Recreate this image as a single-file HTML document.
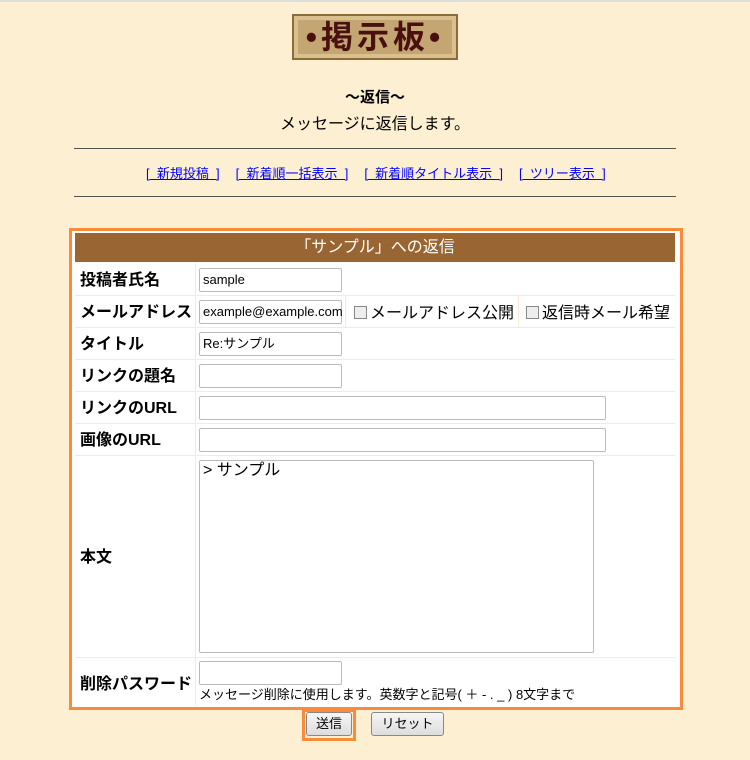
<!DOCTYPE html>
<html><head><meta charset="utf-8"><style>
body{margin:0;width:750px;height:760px;background:#fdf0d2;font-family:"Liberation Sans","Noto Sans CJK JP",sans-serif;position:relative;overflow:hidden}
.a{position:absolute}
.logo{left:292px;top:14px;width:166px;height:46px;background:#c4a672;border:2px solid #8a6d3a;box-sizing:border-box;color:#4a1010;font-size:32px;font-weight:bold;text-align:center;line-height:42px;letter-spacing:4px;box-shadow:inset 0 0 0 4px #d9c08e}
hr{position:absolute;left:74px;width:602px;margin:0;border:0;border-top:1px solid #555}
a{color:#00f;font-size:13px;text-decoration:underline;margin-right:16px}
.box{left:69px;top:228px;width:614px;height:482px;border:3px solid #f88b3c;box-sizing:border-box;background:#fff}
.hd{left:75px;top:233px;width:600px;height:29px;background:#996633;color:#fff;font-size:16px;text-align:center;line-height:29px}
.lb{left:80px;font-weight:bold;font-size:16px}
.row{left:75px;width:600px;border-top:1px solid #f6ead6}
.in{position:absolute;background:#fff;border:1px solid #bbb;border-radius:2px;font-size:13px;padding-left:3px;box-sizing:border-box;height:24px;line-height:22px}
.cb{display:inline-block;width:11px;height:11px;border:1px solid #888;background:#eee;vertical-align:-1px;margin-right:3px}
.btn{position:absolute;top:712px;height:24px;border:1px solid #888;border-radius:3px;background:linear-gradient(#f6f6f6,#ddd);font-size:13px;text-align:center;line-height:22px;box-sizing:border-box}
</style></head><body>
<div class="a" style="left:0;top:0;width:750px;height:2px;background:#ddd"></div>
<div class="a logo">•掲示板•</div>
<div class="a" style="left:0;width:750px;top:86px;text-align:center;font-weight:bold;font-size:15px">～返信～</div>
<div class="a" style="left:0;width:750px;top:110px;text-align:center;font-size:16px">メッセージに返信します。</div>
<hr style="top:148px">
<div class="a" style="left:146px;top:163px;font-size:13px;color:#00f;white-space:nowrap"><a>[&nbsp; 新規投稿&nbsp; ]</a><a>[&nbsp; 新着順一括表示&nbsp; ]</a><a>[&nbsp; 新着順タイトル表示&nbsp; ]</a><a>[&nbsp; ツリー表示&nbsp; ]</a></div>
<hr style="top:196px">
<div class="a box"></div>
<div class="a hd">「サンプル」への返信</div>
<div class="a row" style="top:295px"></div><div class="a row" style="top:327px"></div><div class="a row" style="top:359px"></div><div class="a row" style="top:391px"></div><div class="a row" style="top:423px"></div><div class="a row" style="top:455px"></div><div class="a row" style="top:657px"></div>
<div class="a" style="left:195px;top:263px;width:1px;height:442px;background:#f6ead6"></div>
<div class="a lb" style="top:266px">投稿者氏名</div>
<div class="a lb" style="top:298px">メールアドレス</div>
<div class="a lb" style="top:330px">タイトル</div>
<div class="a lb" style="top:362px">リンクの題名</div>
<div class="a lb" style="top:394px">リンクのURL</div>
<div class="a lb" style="top:426px">画像のURL</div>
<div class="a lb" style="top:543px">本文</div>
<div class="a lb" style="top:670px">削除パスワード</div>
<div class="in" style="left:199px;top:268px;width:143px">sample</div>
<div class="in" style="left:199px;top:300px;width:143px">example@example.com</div>
<div class="a" style="left:345px;top:296px;width:1px;height:31px;background:#f6ead6"></div>
<div class="a" style="left:518px;top:296px;width:1px;height:31px;background:#f6ead6"></div>
<div class="a" style="left:354px;top:299px;font-size:16px"><span class="cb"></span>メールアドレス公開</div>
<div class="a" style="left:526px;top:299px;font-size:16px"><span class="cb"></span>返信時メール希望</div>
<div class="in" style="left:199px;top:332px;width:143px">Re:サンプル</div>
<div class="in" style="left:199px;top:364px;width:143px"></div>
<div class="in" style="left:199px;top:396px;width:407px"></div>
<div class="in" style="left:199px;top:428px;width:407px"></div>
<div class="in" style="left:199px;top:460px;width:395px;height:193px;font-size:16px;line-height:20px">&gt; サンプル</div>
<div class="in" style="left:199px;top:661px;width:143px"></div>
<div class="a" style="left:199px;top:684px;font-size:13px">メッセージ削除に使用します。英数字と記号( ＋ - . _ ) 8文字まで</div>
<div class="a" style="left:302px;top:709px;width:54px;height:32px;border:3px solid #f88b3c;box-sizing:border-box"></div>
<div class="btn" style="left:306px;top:712px;width:46px">送信</div>
<div class="btn" style="left:371px;width:73px">リセット</div>
</body></html>
